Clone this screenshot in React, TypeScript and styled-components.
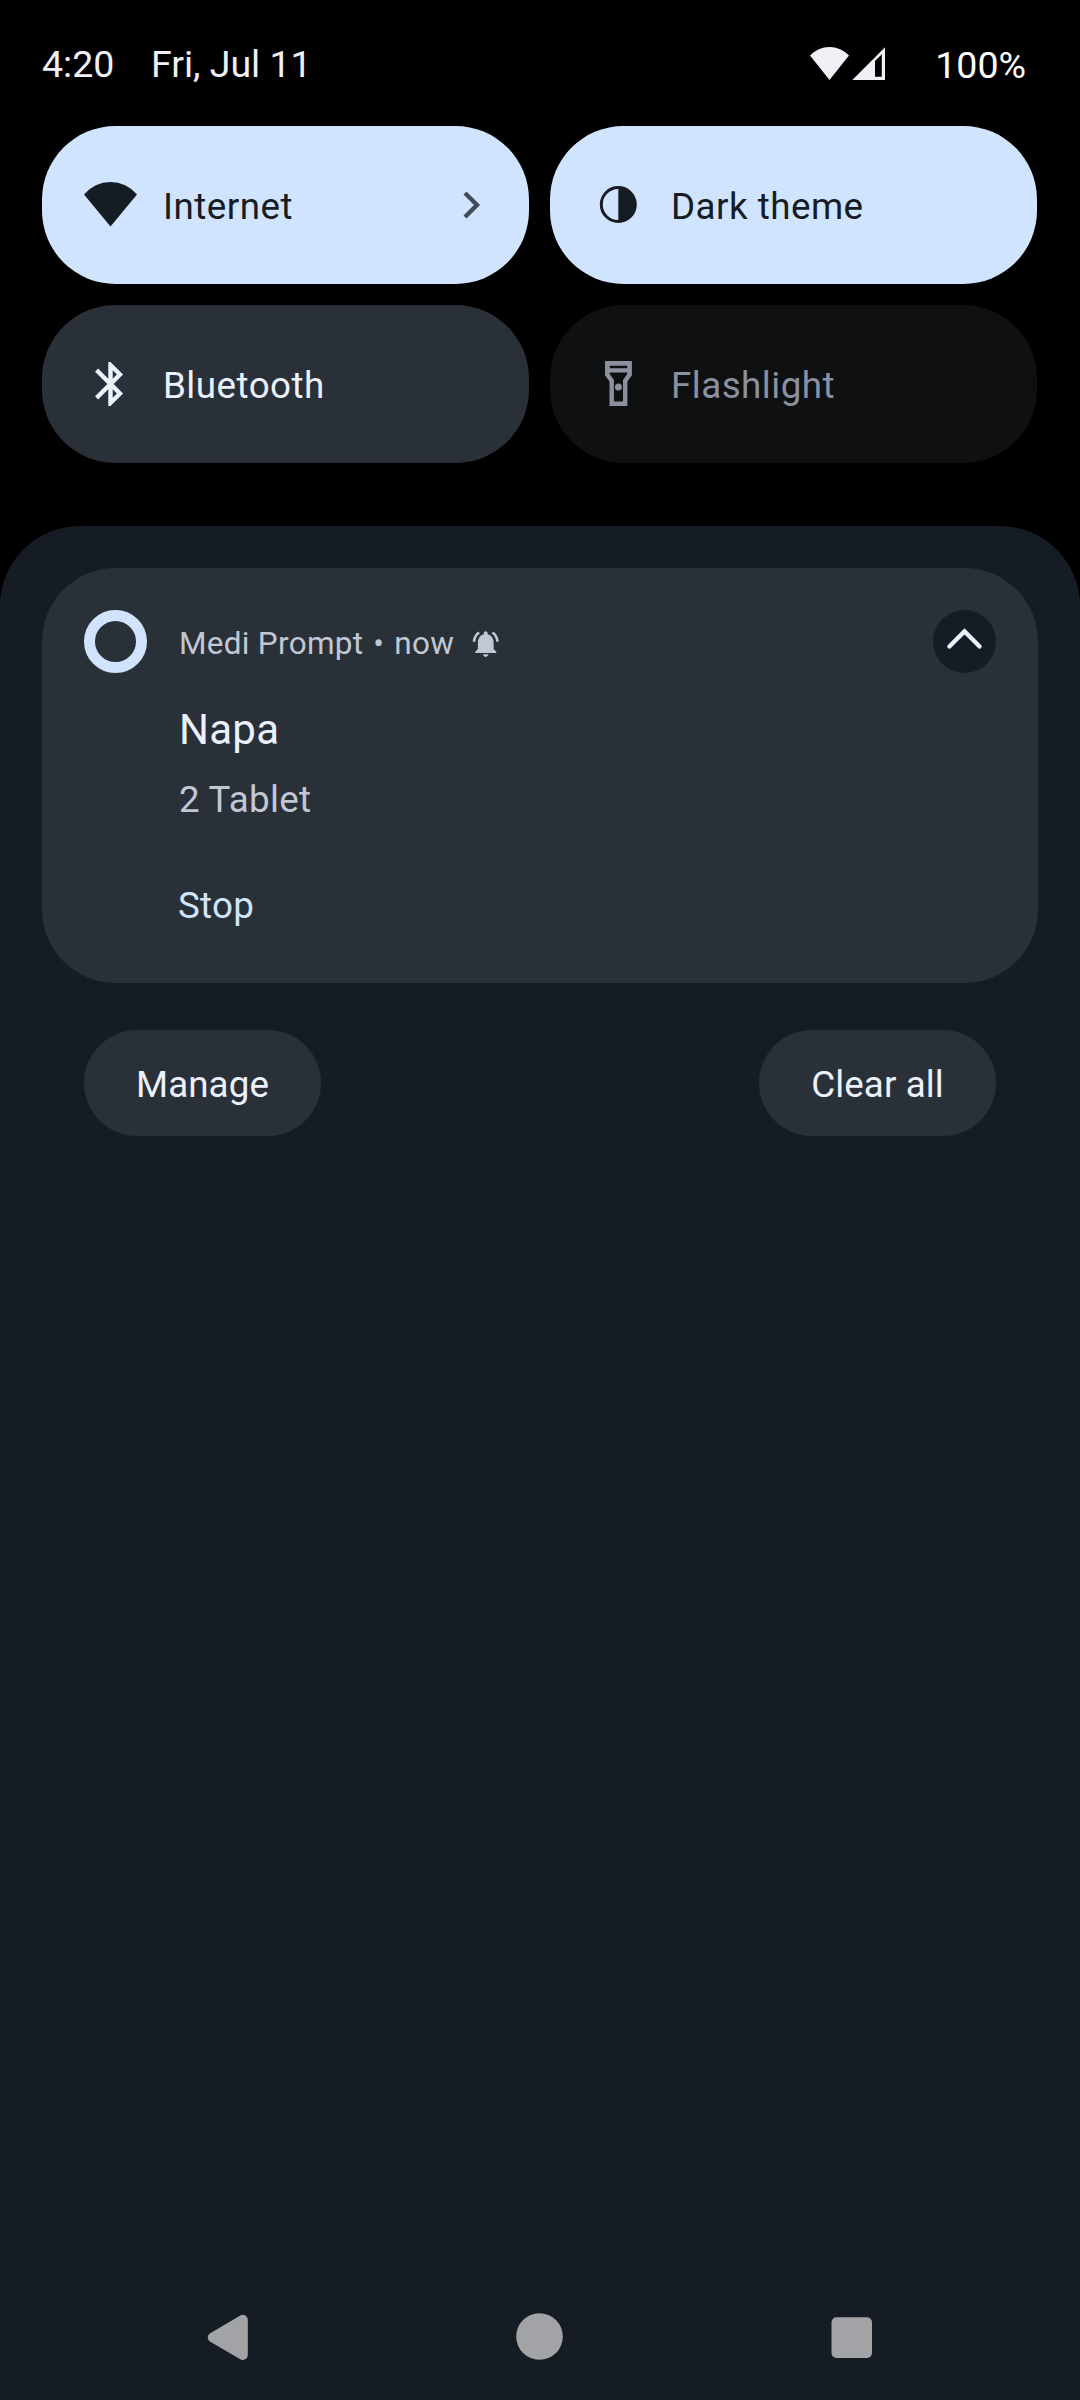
import React from "react";
import styled, { createGlobalStyle } from "styled-components";

const GlobalStyle = createGlobalStyle`
  * { box-sizing: border-box; }
  html, body { margin: 0; padding: 0; background: #000; }
  svg { display: block; flex: none; }
  button { appearance: none; border: 0; padding: 0; margin: 0; font: inherit; text-align: left; }
`;

const Screen = styled.div`
  width: 1080px;
  height: 2400px;
  display: flex;
  flex-direction: column;
  background: #000;
  font-family: Roboto, "Liberation Sans", sans-serif;
  font-size: 36.75px;
  overflow: hidden;
`;

const StatusBar = styled.header`
  display: flex;
  align-items: center;
  height: 126px;
  padding: 1px 54px 0 42px;
  color: #f1f0f7;
  font-size: 37.5px;
  line-height: 44px;
  white-space: nowrap;
`;

const Clock = styled.span`
  width: 109px;
`;

const DateLabel = styled.span`
  flex: 1;
`;

const SignalIcons = styled.div`
  display: flex;
  gap: 3px;
  margin-right: 50.5px;
`;

const Battery = styled.span`
  color: #fff;
  padding-top: 2px;
`;

const QuickSettings = styled.section`
  display: grid;
  grid-template-columns: 487px 487px;
  grid-auto-rows: 158px;
  gap: 21px;
  height: 400px;
  padding: 0 42px;
`;

const Tile = styled.button<{ $bg: string; $fg: string }>`
  display: flex;
  align-items: center;
  padding: 0 48.5px 0 42px;
  border-radius: 73.5px;
  background: ${(p) => p.$bg};
  color: ${(p) => p.$fg};
`;

const TileLabel = styled.span`
  flex: 1;
  margin-left: 26px;
  padding-top: 3px;
  line-height: 44px;
  letter-spacing: 0.013em;
  white-space: nowrap;
`;

const Shade = styled.main`
  flex: 1;
  display: flex;
  flex-direction: column;
  padding-top: 42px;
  border-radius: 80px 80px 0 0;
  background: #161c23;
`;

const Card = styled.article`
  display: flex;
  align-items: flex-start;
  height: 415px;
  margin: 0 42px;
  padding: 42px;
  border-radius: 73.5px;
  background: #2a3038;
`;

const AppRing = styled.div`
  width: 63px;
  height: 63px;
  flex: none;
  border: 11px solid #d0e4ff;
  border-radius: 50%;
`;

const CardBody = styled.div`
  flex: 1;
  display: flex;
  flex-direction: column;
  padding: 14px 0 0 32px;
  letter-spacing: 0.28px;
  white-space: nowrap;
`;

const CardHeader = styled.div`
  display: flex;
  align-items: center;
  gap: 10px;
  height: 40px;
  color: #c1c7d3;
  font-size: 31.5px;
  line-height: 40px;

  svg { margin: 0 0 0 6px; }
`;

const Title = styled.h2`
  margin: 41px 0 0;
  color: #ebf1ff;
  font-size: 42px;
  font-weight: 400;
  line-height: 50px;
`;

const Message = styled.p`
  margin: 23px 0 0;
  color: #c1c7d3;
  line-height: 44px;
`;

const Action = styled.button`
  margin: 62px 0 0 -1px;
  background: none;
  color: #d0e4ff;
  line-height: 44px;
  letter-spacing: 0.3px;
`;

const Collapse = styled.button`
  width: 63px;
  height: 63px;
  border-radius: 50%;
  background: #161c23;
`;

const Footer = styled.div`
  display: flex;
  justify-content: space-between;
  margin: 47px 84px 0;
`;

const Pill = styled.button`
  width: 237px;
  height: 106px;
  padding-top: 3px;
  border-radius: 53px;
  background: #2a3038;
  color: #ebf1ff;
  letter-spacing: 0.1px;
  text-align: center;
`;

const NavBar = styled.nav`
  display: flex;
  align-items: center;
  justify-content: space-between;
  height: 127px;
  margin-top: auto;
  padding: 0 208.5px 0 207px;
`;

const WifiStatus = () => (
  <svg width="39" height="33" viewBox="0 0 39 33" fill="#f1f0f7">
    <path d="M0 8.6A26.6 26.6 0 0 1 39 8.6L19.5 33Z" />
  </svg>
);

const CellStatus = () => (
  <svg width="33" height="33" viewBox="0 0 33 33" fill="#f1f0f7">
    <path fillRule="evenodd" d="M0.3 33L33 0.3V33ZM23 14L29.8 7.2V29.8H23Z" />
  </svg>
);

const WifiIcon = () => (
  <svg width="53" height="52" viewBox="0 0 53 52" fill="currentColor">
    <path d="M0 15.4A34.3 34.3 0 0 1 53 15.4L26.5 47.4Z" />
  </svg>
);

const ContrastIcon = () => (
  <svg width="53" height="52" viewBox="0 0 53 52">
    <circle cx="26.3" cy="25.5" r="17" fill="none" stroke="currentColor" strokeWidth="3" />
    <path d="M26.3 8.5A17 17 0 0 1 26.3 42.5Z" fill="currentColor" />
  </svg>
);

const BluetoothIcon = () => (
  <svg width="53" height="54" viewBox="0 0 24 24" fill="currentColor">
    <path d="M17.71 7.71L12 2h-1v7.59L6.41 5 5 6.41 10.59 12 5 17.59 6.41 19 11 14.41V22h1l5.71-5.71-4.3-4.29 4.3-4.29zM13 5.83l1.88 1.88L13 9.59V5.83zm1.88 10.46L13 18.17v-3.76l1.88 1.88z" />
  </svg>
);

const FlashlightIcon = () => (
  <svg width="53" height="52" viewBox="0 0 53 52" fill="currentColor">
    <path
      fillRule="evenodd"
      d="M13 3H39.9V17.3L35.4 23.5V48H17.5V23.5L13 17.3ZM17.7 7.7V10.2H35.2V7.7ZM17.7 14.4V16L21.9 22V43.6H31V22L35.2 16V14.4Z"
    />
    <circle cx="26.4" cy="29" r="3.5" />
  </svg>
);

const ChevronRight = () => (
  <svg width="18" height="28" viewBox="0 0 18 28" fill="none" stroke="#434b57" strokeWidth="4.3">
    <path d="M2 2L14 14L2 26" />
  </svg>
);

const BellIcon = () => (
  <svg width="31.5" height="31.5" viewBox="0 0 24 24" fill="currentColor">
    <path d="M7.58 4.08L6.15 2.65C3.75 4.48 2.17 7.3 2.03 10.5h2c.15-2.65 1.51-4.97 3.55-6.42zm12.39 6.42h2c-.15-3.2-1.73-6.02-4.12-7.85l-1.42 1.43c2.02 1.45 3.39 3.77 3.54 6.42zM18 11c0-3.07-1.64-5.64-4.5-6.32V4c0-.83-.67-1.5-1.5-1.5s-1.5.67-1.5 1.5v.68C7.63 5.36 6 7.92 6 11v5l-2 2v1h16v-1l-2-2v-5zm-6 11c.14 0 .27-.01.4-.04.65-.14 1.18-.58 1.44-1.18.1-.24.15-.5.15-.78h-4c.01 1.1.9 2 2.01 2z" />
  </svg>
);

const ChevronUp = () => (
  <svg width="63" height="63" viewBox="0 0 63 63" fill="none" stroke="#ebf1ff" strokeWidth="4.3" strokeLinecap="round">
    <path d="M16.4 36.5L31.5 21.4L46.6 36.5" />
  </svg>
);

const BackIcon = () => (
  <svg width="41" height="47" viewBox="0 0 41 47" fill="#a2a3a7" stroke="#a2a3a7" strokeWidth="10" strokeLinejoin="round">
    <path d="M5.8 24.5L35.8 6.8V42Z" />
  </svg>
);

const HomeIcon = () => (
  <svg width="47" height="47" viewBox="0 0 47 47" fill="#a2a3a7">
    <circle cx="23.5" cy="23.5" r="23.3" />
  </svg>
);

const RecentsIcon = () => (
  <svg width="41" height="47" viewBox="0 0 41 47" fill="#a2a3a7">
    <rect x="0.5" y="4.3" width="40.5" height="40.7" rx="5" />
  </svg>
);

const tiles = [
  { label: "Internet", icon: <WifiIcon />, bg: "#d0e4ff", fg: "#161c23", chevron: true },
  { label: "Dark theme", icon: <ContrastIcon />, bg: "#d0e4ff", fg: "#161c23" },
  { label: "Bluetooth", icon: <BluetoothIcon />, bg: "#2a3038", fg: "#ebf1ff" },
  { label: "Flashlight", icon: <FlashlightIcon />, bg: "#0e1011", fg: "#8b919e" },
];

export default function App() {
  return (
    <Screen>
      <GlobalStyle />
      <StatusBar>
        <Clock>4:20</Clock>
        <DateLabel>Fri, Jul 11</DateLabel>
        <SignalIcons>
          <WifiStatus />
          <CellStatus />
        </SignalIcons>
        <Battery>100%</Battery>
      </StatusBar>
      <QuickSettings>
        {tiles.map((t) => (
          <Tile key={t.label} $bg={t.bg} $fg={t.fg}>
            {t.icon}
            <TileLabel>{t.label}</TileLabel>
            {t.chevron && <ChevronRight />}
          </Tile>
        ))}
      </QuickSettings>
      <Shade>
        <Card>
          <AppRing />
          <CardBody>
            <CardHeader>
              <span>Medi Prompt</span>
              <span>•</span>
              <span>now</span>
              <BellIcon />
            </CardHeader>
            <Title>Napa</Title>
            <Message>2 Tablet</Message>
            <Action>Stop</Action>
          </CardBody>
          <Collapse>
            <ChevronUp />
          </Collapse>
        </Card>
        <Footer>
          <Pill>Manage</Pill>
          <Pill>Clear all</Pill>
        </Footer>
        <NavBar>
          <BackIcon />
          <HomeIcon />
          <RecentsIcon />
        </NavBar>
      </Shade>
    </Screen>
  );
}
